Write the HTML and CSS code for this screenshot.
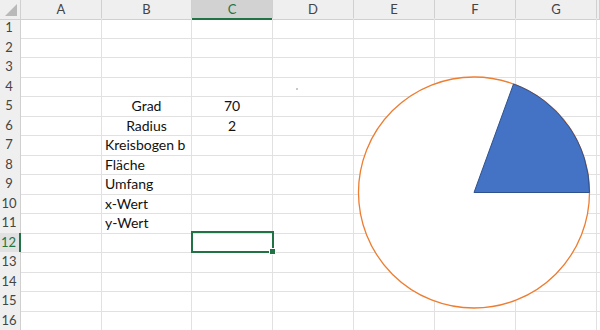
FILE: index.html
```html
<!DOCTYPE html>
<html lang="de">
<head>
    <meta charset="UTF-8">
    <meta name="viewport" content="width=device-width, initial-scale=1.0">
    <title>Kreisausschnitt</title>
    <link rel="stylesheet" href="styles.css">
</head>
<body>
    <div class="sheet">
        <!-- column headers -->
        <div class="row head">
            <div class="corner"><span class="tri"></span></div>
            <div class="col">A</div>
            <div class="col">B</div>
            <div class="col active">C</div>
            <div class="col">D</div>
            <div class="col">E</div>
            <div class="col">F</div>
            <div class="col">G</div>
            <div class="col"></div>
        </div>

        <div class="row"><div class="num">1</div><div class="c"></div><div class="c"></div><div class="c"></div><div class="c"></div><div class="c"></div><div class="c"></div><div class="c"></div><div class="c"></div></div>
        <div class="row"><div class="num">2</div><div class="c"></div><div class="c"></div><div class="c"></div><div class="c"></div><div class="c"></div><div class="c"></div><div class="c"></div><div class="c"></div></div>
        <div class="row"><div class="num">3</div><div class="c"></div><div class="c"></div><div class="c"></div><div class="c"></div><div class="c"></div><div class="c"></div><div class="c"></div><div class="c"></div></div>
        <div class="row"><div class="num">4</div><div class="c"></div><div class="c"></div><div class="c"></div><div class="c"></div><div class="c"></div><div class="c"></div><div class="c"></div><div class="c"></div></div>
        <div class="row"><div class="num">5</div><div class="c"></div><div class="c center">Grad</div><div class="c center">70</div><div class="c"></div><div class="c"></div><div class="c"></div><div class="c"></div><div class="c"></div></div>
        <div class="row"><div class="num">6</div><div class="c"></div><div class="c center">Radius</div><div class="c center">2</div><div class="c"></div><div class="c"></div><div class="c"></div><div class="c"></div><div class="c"></div></div>
        <div class="row"><div class="num">7</div><div class="c"></div><div class="c">Kreisbogen b</div><div class="c"></div><div class="c"></div><div class="c"></div><div class="c"></div><div class="c"></div><div class="c"></div></div>
        <div class="row"><div class="num">8</div><div class="c"></div><div class="c">Fläche</div><div class="c"></div><div class="c"></div><div class="c"></div><div class="c"></div><div class="c"></div><div class="c"></div></div>
        <div class="row"><div class="num">9</div><div class="c"></div><div class="c">Umfang</div><div class="c"></div><div class="c"></div><div class="c"></div><div class="c"></div><div class="c"></div><div class="c"></div></div>
        <div class="row"><div class="num">10</div><div class="c"></div><div class="c">x-Wert</div><div class="c"></div><div class="c"></div><div class="c"></div><div class="c"></div><div class="c"></div><div class="c"></div></div>
        <div class="row"><div class="num">11</div><div class="c"></div><div class="c">y-Wert</div><div class="c"></div><div class="c"></div><div class="c"></div><div class="c"></div><div class="c"></div><div class="c"></div></div>
        <div class="row"><div class="num active">12</div><div class="c"></div><div class="c"></div><div class="c"></div><div class="c"></div><div class="c"></div><div class="c"></div><div class="c"></div><div class="c"></div></div>
        <div class="row"><div class="num">13</div><div class="c"></div><div class="c"></div><div class="c"></div><div class="c"></div><div class="c"></div><div class="c"></div><div class="c"></div><div class="c"></div></div>
        <div class="row"><div class="num">14</div><div class="c"></div><div class="c"></div><div class="c"></div><div class="c"></div><div class="c"></div><div class="c"></div><div class="c"></div><div class="c"></div></div>
        <div class="row"><div class="num">15</div><div class="c"></div><div class="c"></div><div class="c"></div><div class="c"></div><div class="c"></div><div class="c"></div><div class="c"></div><div class="c"></div></div>
        <div class="row"><div class="num">16</div><div class="c"></div><div class="c"></div><div class="c"></div><div class="c"></div><div class="c"></div><div class="c"></div><div class="c"></div><div class="c"></div></div>

        <!-- selected cell C12 -->
        <div class="selection"><span class="handle"></span></div>

        <!-- stray dot near D4 -->
        <span class="dot"></span>

        <!-- shapes: circle + 70 degree sector -->
        <svg class="shapes" width="250" height="250" viewBox="0 0 250 250">
            <circle cx="124" cy="122.5" r="115.5" fill="#fff" stroke="#ed7d31" stroke-width="1.3"/>
            <path d="M124 122.5 L239.5 122.5 A115.5 115.5 0 0 0 163.5 14 Z" fill="#4472c4" stroke="#2f528f" stroke-width="1"/>
        </svg>
    </div>
</body>
</html>
```

FILE: styles.css
```css
:root {
    --grid: #e1e1e1;
    --head-bg: #efefef;
    --head-line: #d0d0d0;
    --green: #217346;
}
body {
    margin: 0;
    background: #fff;
    font-family: Lato, "Open Sans", sans-serif;
    color: #111;
}
.sheet {
    position: relative;
    width: 600px;
    height: 330px;
    overflow: hidden;
}
.row {
    display: grid;
    grid-template-columns: 21px 81px 90px 81px 81px 81px 81px 81px 1fr;
    height: 19.5px;
}
.row.head {
    height: 18px;
}
.c {
    border-right: 1px solid var(--grid);
    border-bottom: 1px solid var(--grid);
    font-size: 14px;
    line-height: 19.5px;
    padding-left: 3px;
    white-space: nowrap;
    overflow: visible;
}
.c.center {
    text-align: center;
    padding-left: 0;
}
.num {
    background: var(--head-bg);
    border-right: 1px solid var(--head-line);
    border-bottom: 1px solid var(--grid);
    font-size: 13px;
    line-height: 19.5px;
    color: #444;
    text-align: center;
    padding-right: 2px;
}
.num.active {
    background: #e1e1e1;
    color: var(--green);
    border-right: 2px solid var(--green);
}
.corner {
    position: relative;
    background: var(--head-bg);
    border-right: 1px solid var(--head-line);
    border-bottom: 1px solid var(--head-line);
}
.tri {
    position: absolute;
    right: 3px;
    bottom: 3px;
    width: 0;
    height: 0;
    border-left: 12px solid transparent;
    border-bottom: 12px solid #b9b9b9;
}
.col {
    background: var(--head-bg);
    border-right: 1px solid var(--head-line);
    border-bottom: 1px solid var(--head-line);
    font-size: 13px;
    line-height: 18px;
    color: #444;
    text-align: center;
}
.col.active {
    background: #d2d2d2;
    color: var(--green);
    border-bottom: 2px solid var(--green);
}
.selection {
    position: absolute;
    left: 191px;
    top: 231px;
    width: 79px;
    height: 18px;
    border: 2px solid var(--green);
}
.handle {
    position: absolute;
    right: -4px;
    bottom: -4px;
    width: 5px;
    height: 5px;
    background: var(--green);
    border: 1px solid #fff;
}
.dot {
    position: absolute;
    left: 296px;
    top: 88px;
    width: 2px;
    height: 2px;
    background: #c8c8c8;
}
.shapes {
    position: absolute;
    left: 350px;
    top: 70px;
}
```
